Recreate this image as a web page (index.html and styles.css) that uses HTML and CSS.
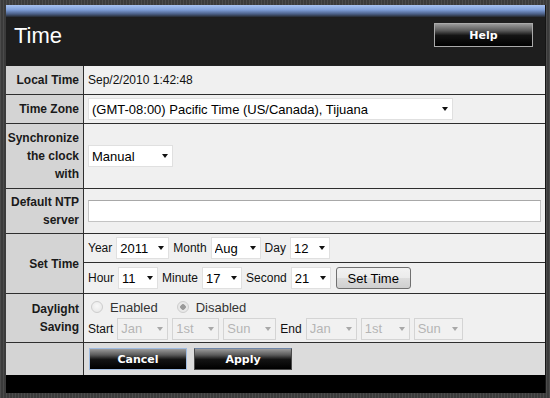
FILE: index.html
```html
<!DOCTYPE html>
<html>
<head>
<meta charset="utf-8">
<title>Time</title>
<link rel="stylesheet" href="styles.css">
</head>
<body>
<div class="panel">
  <div class="topbar"></div>
  <div class="header">
    <h1 class="title">Time</h1>
    <button class="btn-dark btn-help">Help</button>
  </div>
  <div class="form">
    <div class="row row-std">
      <div class="label">Local Time</div>
      <div class="value">Sep/2/2010 1:42:48</div>
    </div>
    <div class="row row-std">
      <div class="label">Time Zone</div>
      <div class="value">
        <span class="sel w-tz"><select><option>(GMT-08:00) Pacific Time (US/Canada), Tijuana</option></select></span>
      </div>
    </div>
    <div class="row row-sync">
      <div class="label">Synchronize the clock with</div>
      <div class="value">
        <span class="sel w-manual"><select><option>Manual</option></select></span>
      </div>
    </div>
    <div class="row row-ntp">
      <div class="label">Default NTP server</div>
      <div class="value">
        <input class="text-input" type="text" value="">
      </div>
    </div>
    <div class="row row-set">
      <div class="label">Set Time</div>
      <div class="value value-stack">
        <div class="subrow subrow-first">
          <span>Year</span>
          <span class="sel w-year"><select><option>2011</option></select></span>
          <span>Month</span>
          <span class="sel w-month"><select><option>Aug</option></select></span>
          <span>Day</span>
          <span class="sel w-day"><select><option>12</option></select></span>
        </div>
        <div class="subrow">
          <span>Hour</span>
          <span class="sel w-hms"><select><option>11</option></select></span>
          <span>Minute</span>
          <span class="sel w-hms"><select><option>17</option></select></span>
          <span>Second</span>
          <span class="sel w-hms"><select><option>21</option></select></span>
          <button class="btn-light">Set Time</button>
        </div>
      </div>
    </div>
    <div class="row row-dst">
      <div class="label">Daylight Saving</div>
      <div class="value value-dst">
        <div class="dst-line dst-radios">
          <label class="radio-item"><input type="radio" name="dst" disabled><span>Enabled</span></label>
          <label class="radio-item radio-second"><input type="radio" name="dst" checked disabled><span>Disabled</span></label>
        </div>
        <div class="dst-line">
          <span>Start</span>
          <span class="sel sel-off w-dmon"><select disabled><option>Jan</option></select></span>
          <span class="sel sel-off w-dord"><select disabled><option>1st</option></select></span>
          <span class="sel sel-off w-dday"><select disabled><option>Sun</option></select></span>
          <span>End</span>
          <span class="sel sel-off w-dmon"><select disabled><option>Jan</option></select></span>
          <span class="sel sel-off w-dord2"><select disabled><option>1st</option></select></span>
          <span class="sel sel-off w-dday2"><select disabled><option>Sun</option></select></span>
        </div>
      </div>
    </div>
    <div class="row row-btn">
      <div class="label"></div>
      <div class="value value-btn">
        <button class="btn-dark btn-action btn-focus">Cancel</button>
        <button class="btn-dark btn-action">Apply</button>
      </div>
    </div>
  </div>
  <div class="footer"></div>
</div>
</body>
</html>
```

FILE: styles.css
```css
html, body {
  margin: 0;
  padding: 0;
}
body {
  width: 550px;
  height: 398px;
  overflow: hidden;
  background: repeating-linear-gradient(90deg, #4b4b4b 0 1px, #3b3b3b 1px 3px);
  font-family: "Liberation Sans", Arial, sans-serif;
}
.panel {
  margin: 5px 0 0 6px;
  width: 540px;
  box-sizing: border-box;
  border-right: 1px solid #151515;
  background: #f0f0f0;
}
.topbar {
  height: 12px;
  background: linear-gradient(#a8c2f0, #7f9fd8 40%, #4b5f86 75%, #25292f);
}
.header {
  height: 49px;
  box-sizing: border-box;
  background: #1e1e1e;
  display: flex;
  justify-content: space-between;
  align-items: flex-start;
  padding: 6px 12px 0 8px;
}
.title {
  margin: 0;
  font-family: "Liberation Sans", Arial, sans-serif;
  font-weight: 400;
  font-size: 22px;
  line-height: 25px;
  color: #ffffff;
}
.btn-dark {
  box-sizing: border-box;
  padding: 0;
  color: #ffffff;
  font-family: "DejaVu Sans", Verdana, sans-serif;
  font-weight: bold;
  font-size: 11px;
  background: linear-gradient(#9a9a9a, #5a5a5a 30%, #141414 52%, #000000);
  border: 1px solid #aaaaaa;
  cursor: pointer;
}
.btn-help {
  width: 99px;
  height: 24px;
}
.row {
  display: flex;
  box-sizing: border-box;
  border-bottom: 1px solid #2e2e2e;
}
.row-std { height: 29px; }
.row-sync { height: 65px; }
.row-ntp { height: 45px; }
.row-set { height: 60px; }
.row-dst { height: 49px; }
.row-btn { height: 32px; border-bottom: none; }
.label {
  width: 78px;
  flex: none;
  box-sizing: border-box;
  background: #d4d4d4;
  border-right: 1px solid #2e2e2e;
  display: flex;
  align-items: center;
  justify-content: flex-end;
  text-align: right;
  padding-right: 4px;
  font-weight: bold;
  font-size: 12px;
  line-height: 18px;
  color: #1a1a1a;
}
.value {
  flex: 1;
  display: flex;
  align-items: center;
  gap: 4px;
  padding: 0 4px;
  font-size: 12px;
  color: #111111;
}
.value-stack {
  flex-direction: column;
  align-items: stretch;
  gap: 0;
  padding: 0;
}
.subrow {
  display: flex;
  align-items: center;
  gap: 4px;
  padding-left: 4px;
  flex: 1;
}
.subrow-first {
  flex: none;
  height: 29px;
  box-sizing: border-box;
  border-bottom: 1px solid #2e2e2e;
}
.sel {
  position: relative;
  display: inline-block;
  height: 22px;
  flex: none;
}
.sel select {
  -webkit-appearance: none;
  appearance: none;
  width: 100%;
  height: 100%;
  box-sizing: border-box;
  margin: 0;
  padding: 0 0 0 3px;
  border: 1px solid #e0e0e0;
  border-radius: 0;
  background: #ffffff;
  font-family: "Liberation Sans", Arial, sans-serif;
  font-size: 13px;
  color: #000000;
}
.sel::after {
  content: "";
  position: absolute;
  right: 5px;
  top: 50%;
  margin-top: -2px;
  border-left: 3.5px solid transparent;
  border-right: 3.5px solid transparent;
  border-top: 4px solid #111111;
  pointer-events: none;
}
.sel-off select {
  background: #f2f2f2;
  border-color: #c9c9c9;
  color: #9c9c9c;
}
.sel-off::after {
  border-top-color: #a8a8a8;
}
.w-tz { width: 365px; }
.w-manual { width: 85px; }
.w-year { width: 53px; }
.w-month { width: 50px; }
.w-day { width: 40px; }
.w-hms { width: 40px; }
.w-dmon { width: 51px; }
.w-dord { width: 47px; }
.w-dday { width: 53px; }
.w-dord2 { width: 49px; }
.w-dday2 { width: 49px; }
.text-input {
  flex: 1;
  height: 22px;
  box-sizing: border-box;
  margin: 0;
  border: 1px solid #c4c4c4;
  border-top-color: #a8a8a8;
  background: #ffffff;
  font-family: "Liberation Sans", Arial, sans-serif;
  font-size: 13px;
}
.btn-light {
  margin-left: 1px;
  width: 75px;
  height: 22px;
  box-sizing: border-box;
  padding: 0;
  border: 1px solid #707070;
  border-radius: 3px;
  background: linear-gradient(#f2f2f2, #ebebeb 50%, #dddddd 50%, #cfcfcf);
  font-family: "Liberation Sans", Arial, sans-serif;
  font-size: 13px;
  color: #000000;
}
.value-dst {
  flex-direction: column;
  align-items: stretch;
  justify-content: center;
  gap: 0;
}
.dst-line {
  display: flex;
  align-items: center;
  gap: 4px;
  height: 22px;
}
.dst-radios {
  height: 21px;
}
.radio-item {
  display: flex;
  align-items: center;
  font-size: 13px;
  color: #333333;
}
.radio-item span {
  margin-left: 7px;
}
.radio-second {
  margin-left: 12px;
}
.radio-item input {
  -webkit-appearance: none;
  appearance: none;
  width: 12px;
  height: 12px;
  margin: 0 0 0 3px;
  box-sizing: border-box;
  border: 1px solid #cdcdcd;
  border-radius: 50%;
  background: radial-gradient(circle at 50% 40%, #f8f8f8, #e4e4e4);
}
.radio-item input:checked {
  background: radial-gradient(circle, #9a9a9a 0 2.5px, #e8e8e8 3px);
}
.value-btn {
  background: #dcdcdc;
  padding-left: 5px;
  gap: 7px;
}
.btn-action {
  width: 98px;
  height: 22px;
  border-color: #4a4a4a;
  border-top-color: #6f86a8;
}
.btn-focus {
  border-color: #9fbbe0;
}
.footer {
  height: 18px;
  background: #000000;
}
```
